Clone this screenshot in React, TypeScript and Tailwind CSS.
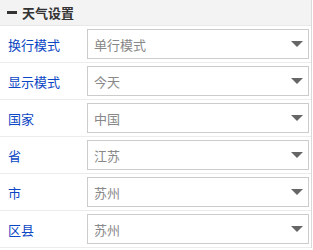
const rows = [
  { label: '换行模式', value: '单行模式' },
  { label: '显示模式', value: '今天' },
  { label: '国家', value: '中国' },
  { label: '省', value: '江苏' },
  { label: '市', value: '苏州' },
  { label: '区县', value: '苏州' },
];

function Caret() {
  return (
    <svg width="12" height="6" viewBox="0 0 12 6" className="shrink-0">
      <path d="M0 0 H12 L6 6 Z" fill="#666" />
    </svg>
  );
}

export default function App() {
  return (
    <div
      className="w-[312px] border-r border-[#d9d9d9] bg-white text-[13px]"
      style={{ fontFamily: '"Noto Sans CJK SC", "Liberation Sans", sans-serif' }}
    >
      {/* Header */}
      <div className="flex h-[26px] items-center gap-[5px] border-b border-[#e8e8e8] bg-[#f3f3f3] pl-[7px]">
        <span className="h-[3px] w-[10px] bg-[#333]" />
        <span className="font-bold leading-none text-[#333]">天气设置</span>
      </div>

      {/* Settings rows */}
      {rows.map((row) => (
        <div key={row.label} className="flex h-[37px] items-center border-b border-[#ececec]">
          <div className="w-[87px] pl-[8px] leading-none text-[#0b46c4]">{row.label}</div>
          <div className="flex h-[30px] w-[222px] items-center justify-between border border-[#cccccc] pl-[6px] pr-[5px]">
            <span className="leading-none text-[#888]">{row.value}</span>
            <Caret />
          </div>
        </div>
      ))}
    </div>
  );
}
